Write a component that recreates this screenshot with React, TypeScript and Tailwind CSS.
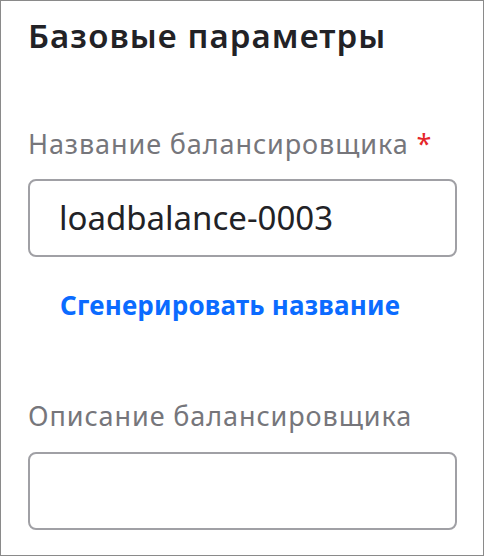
import React from 'react';

const font = { fontFamily: '"Noto Sans", "Open Sans", sans-serif' };

export default function App() {
  return (
    <div className="w-[484px] h-[556px] bg-white border border-[#8a8a8a] box-border" style={font}>
      <div className="pl-[27px] pr-[26px] pt-[15px]">
        <h2 className="text-[33px] leading-[40px] font-semibold tracking-[1.1px] text-[#222226]">Базовые параметры</h2>

        <div className="mt-[70px] text-[27px] leading-[36px] tracking-[0.9px] text-[#76767b]">
          Название балансировщика <span className="text-[#e5262a]">*</span>
        </div>
        <div className="mt-[17px] h-[78px] rounded-[8px] border-2 border-[#a0a0a5] flex items-center pl-[29px] text-[33px] text-[#222226]">
          loadbalance-0003
        </div>
        <div className="mt-[30px] pl-[32px] text-[26px] leading-[36px] font-bold tracking-[0.2px] text-[#0b6bff]">
          Сгенерировать название
        </div>

        <div className="mt-[75px] text-[27px] leading-[36px] tracking-[0.9px] text-[#76767b]">Описание балансировщика</div>
        <div className="mt-[18px] h-[78px] rounded-[8px] border-2 border-[#a0a0a5]" />
      </div>
    </div>
  );
}
